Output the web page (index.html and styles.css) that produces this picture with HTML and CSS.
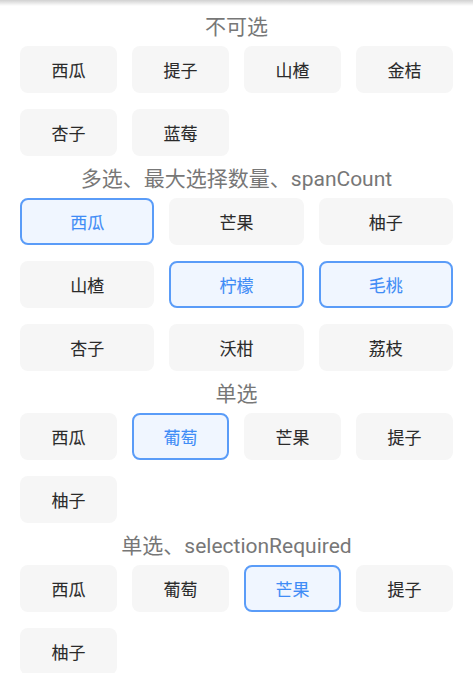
FILE: index.html
```html
<!DOCTYPE html>
<html lang="zh">
<head>
<meta charset="utf-8">
<link rel="stylesheet" href="styles.css">
</head>
<body>
<div class="shadow"></div>
<main class="page">
  <section class="section">
    <div class="title">不可选</div>
    <div class="grid cols4">
      <div class="chip">西瓜</div>
      <div class="chip">提子</div>
      <div class="chip">山楂</div>
      <div class="chip">金桔</div>
      <div class="chip">杏子</div>
      <div class="chip">蓝莓</div>
    </div>
  </section>
  <section class="section">
    <div class="title">多选、最大选择数量、spanCount</div>
    <div class="grid cols3">
      <div class="chip selected">西瓜</div>
      <div class="chip">芒果</div>
      <div class="chip">柚子</div>
      <div class="chip">山楂</div>
      <div class="chip selected">柠檬</div>
      <div class="chip selected">毛桃</div>
      <div class="chip">杏子</div>
      <div class="chip">沃柑</div>
      <div class="chip">荔枝</div>
    </div>
  </section>
  <section class="section">
    <div class="title">单选</div>
    <div class="grid cols4">
      <div class="chip">西瓜</div>
      <div class="chip selected">葡萄</div>
      <div class="chip">芒果</div>
      <div class="chip">提子</div>
      <div class="chip">柚子</div>
    </div>
  </section>
  <section class="section">
    <div class="title">单选、selectionRequired</div>
    <div class="grid cols4">
      <div class="chip">西瓜</div>
      <div class="chip">葡萄</div>
      <div class="chip selected">芒果</div>
      <div class="chip">提子</div>
      <div class="chip">柚子</div>
    </div>
  </section>
</main>
</body>
</html>
```
FILE: styles.css
```css
html, body {
  margin: 0;
  padding: 0;
  background: #ffffff;
  overflow: hidden;
}
body {
  font-family: Roboto, "Noto Sans CJK SC", sans-serif;
  width: 473px;
  height: 673px;
  position: relative;
}
.shadow {
  position: absolute;
  left: 0;
  top: 0;
  width: 100%;
  height: 6px;
  background: linear-gradient(to bottom, rgba(0,0,0,0.18), rgba(0,0,0,0));
}
.page {
  padding: 12px 20px 0 20px;
  display: flex;
  flex-direction: column;
  gap: 8px;
}
.section {
  display: flex;
  flex-direction: column;
  gap: 4px;
}
.title {
  height: 30px;
  line-height: 30px;
  text-align: center;
  font-size: 21px;
  color: #777777;
}
.grid {
  display: grid;
  column-gap: 15px;
  row-gap: 16px;
}
.cols4 { grid-template-columns: repeat(4, 1fr); }
.cols3 { grid-template-columns: repeat(3, 1fr); }
.chip {
  height: 47px;
  box-sizing: border-box;
  border-radius: 8px;
  background: #f6f6f6;
  color: #2a2a2a;
  font-size: 17px;
  font-weight: 400;
  -webkit-text-stroke: 0.1px currentColor;
  display: flex;
  align-items: center;
  justify-content: center;
  border: 2px solid transparent;
}
.chip.selected {
  background: #f0f6ff;
  border-color: #5a9cf8;
  color: #3f8cf6;
}
```
